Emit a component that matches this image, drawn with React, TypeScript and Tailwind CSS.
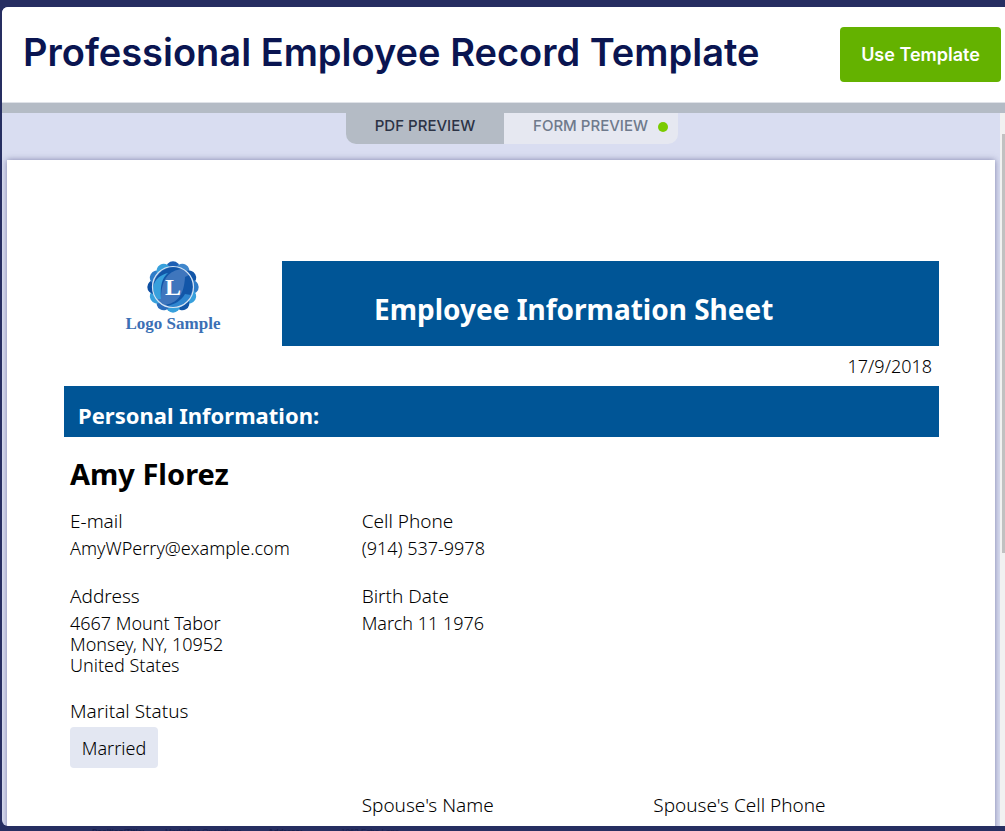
import type { ReactNode } from "react";

const petals = [
  { angle: 0, color: "#1d5fb4" },
  { angle: 30, color: "#3f86cc" },
  { angle: 60, color: "#1256a8" },
  { angle: 90, color: "#2f7cc8" },
  { angle: 120, color: "#38a0dc" },
  { angle: 150, color: "#1256a8" },
  { angle: 180, color: "#38a0dc" },
  { angle: 210, color: "#2a6cbc" },
  { angle: 240, color: "#38a0dc" },
  { angle: 270, color: "#0d4fa3" },
  { angle: 300, color: "#2f7cc8" },
  { angle: 330, color: "#38a0dc" },
];

function Logo() {
  return (
    <div className="flex flex-col items-center">
      <svg viewBox="0 0 52 52" className="w-[52px] h-[52px]" aria-hidden="true">
        {petals.map((petal) => (
          <circle
            key={petal.angle}
            cx="26"
            cy="7.5"
            r="7.2"
            fill={petal.color}
            transform={`rotate(${petal.angle} 26 26)`}
          />
        ))}
        <circle cx="26" cy="26" r="20.5" fill="#3f76bd" />
        <path d="M6 26C8 14 16 6 28 6L34 8C23 10 15 16 14 36L10 38C7 34 6 30 6 26Z" fill="#1256a8" />
        <path d="M6 26C8 18 13 14 21 12C15 17 13 24 14 38L10 38C7 34 6 30 6 26Z" fill="#38a0dc" />
        <path d="M46 26C44 38 36 46 24 46L18 44C29 42 37 36 38 16L42 14C45 18 46 22 46 26Z" fill="#1256a8" />
        <path d="M44 34C41 41 34 46 25 46L20 45C28 43 34 40 38 33Z" fill="#2f86d0" />
        <circle cx="26" cy="26" r="20.5" fill="none" stroke="#d5e4f4" strokeWidth="1.2" />
        <text
          x="26"
          y="34"
          textAnchor="middle"
          fill="#fff"
          className="font-['Liberation_Serif',serif] font-bold text-[24px]"
        >
          L
        </text>
      </svg>
      <span className="pt-px font-['Liberation_Serif',serif] font-bold text-[17px] leading-5 text-[#3b70b5]">
        Logo Sample
      </span>
    </div>
  );
}

function Field({ label, children }: { label: string; children?: ReactNode }) {
  return (
    <div>
      <dt className="text-[19px] leading-7">{label}</dt>
      <dd className="text-lg leading-[21px] pt-[3px]">{children}</dd>
    </div>
  );
}

export default function App() {
  return (
    <div className="h-screen flex flex-col overflow-hidden bg-[#262e61] pt-[7px]">
      <div className="flex-1 min-h-0 ml-0.5 flex flex-col overflow-hidden rounded-l-md bg-[#d9ddf1]">
        {/* Header */}
        <header className="shrink-0 flex items-center justify-between bg-white h-24 pl-[21px] pr-1 border-b border-[#dfe2e8]">
          <h1 className="pb-1.5 font-['Inter',sans-serif] font-semibold text-[38px] leading-12 text-[#0a1551] whitespace-nowrap">
            Professional Employee Record Template
          </h1>
          <button
            type="button"
            className="shrink-0 w-[161px] h-[55px] rounded bg-[#64b200] text-white font-['Inter',sans-serif] font-semibold text-lg whitespace-nowrap"
          >
            Use Template
          </button>
        </header>
        <div className="shrink-0 h-2.5 bg-[#b4bbc5]" />

        <div className="flex-1 min-h-0 flex">
          <main className="flex-1 min-w-0 overflow-hidden px-[5px]">
            {/* Preview tabs */}
            <div
              role="tablist"
              className="flex justify-center h-[47px] pl-[22px] font-['Inter',sans-serif] font-medium text-[15px]"
            >
              <button
                type="button"
                role="tab"
                aria-selected="true"
                className="w-[158px] h-[31px] pb-1 rounded-bl-[10px] bg-[#b4bbc5] text-[#2c3345]"
              >
                PDF PREVIEW
              </button>
              <button
                type="button"
                role="tab"
                aria-selected="false"
                className="w-[174px] h-[31px] pb-1 pr-2.5 flex items-center justify-end gap-2.5 rounded-br-[10px] bg-[#e6e8f1] text-[#6f7a8c]"
              >
                FORM PREVIEW
                <span className="size-2.5 rounded-full bg-[#7acb00]" />
              </button>
            </div>

            {/* Document */}
            <article className="min-h-full bg-white shadow-[0_0_6px_rgba(40,40,100,0.5)] pt-[101px] pl-[57px] pr-14 font-['Noto_Sans','Open_Sans',sans-serif] font-light text-black">
              <div className="flex">
                <div className="w-[218px] shrink-0">
                  <Logo />
                </div>
                <h2 className="flex-1 h-[85px] flex items-center pt-2.5 pl-[92px] bg-[#005596] text-white font-bold text-[28px]">
                  Employee Information Sheet
                </h2>
              </div>
              <p className="h-10 pr-[7px] text-right text-lg leading-10">17/9/2018</p>
              <h3 className="h-[51px] pt-2 pl-3.5 flex items-center bg-[#005596] text-white font-bold text-[22px]">
                Personal Information:
              </h3>

              <div className="pl-1.5 -mr-1.5">
                <h4 className="pt-4 pb-3 text-black font-bold text-[29px] leading-[42px]">Amy Florez</h4>
                <dl className="grid grid-cols-3 gap-y-[23px]">
                  <Field label="E-mail">AmyWPerry@example.com</Field>
                  <Field label="Cell Phone">(914) 537-9978</Field>
                  <div />
                  <Field label="Address">
                    4667 Mount Tabor
                    <br />
                    Monsey, NY, 10952
                    <br />
                    United States
                  </Field>
                  <Field label="Birth Date">March 11 1976</Field>
                  <div />
                  <div className="-mt-0.5">
                    <dt className="text-[19px] leading-7">Marital Status</dt>
                    <dd className="mt-0.5 w-[88px] h-[41px] flex items-center justify-center rounded-sm bg-[#e3e7f2] text-lg">
                      Married
                    </dd>
                  </div>
                  <div />
                  <div />
                  <div />
                  <Field label="Spouse's Name" />
                  <Field label="Spouse's Cell Phone" />
                </dl>
              </div>
            </article>
          </main>

          {/* Scrollbar */}
          <div className="shrink-0 w-[5px] pl-0.5 pt-[21px] bg-[#f1f1f1]">
            <div className="h-[419px] bg-[#c1c1c1]" />
          </div>
        </div>
      </div>

      {/* Page behind the dialog */}
      <div
        aria-hidden="true"
        className="shrink-0 h-[5px] overflow-hidden flex pl-[92px] font-['Liberation_Sans',sans-serif] text-[8px] leading-3 text-[#161d4b] whitespace-nowrap"
      >
        <b className="w-[73px]">Position/Title:</b>
        <span className="w-[103px]">Marketing Operations</span>
        <b className="w-[73px]">Address:</b>
        <span>1962 Echo Lane</span>
      </div>
    </div>
  );
}
